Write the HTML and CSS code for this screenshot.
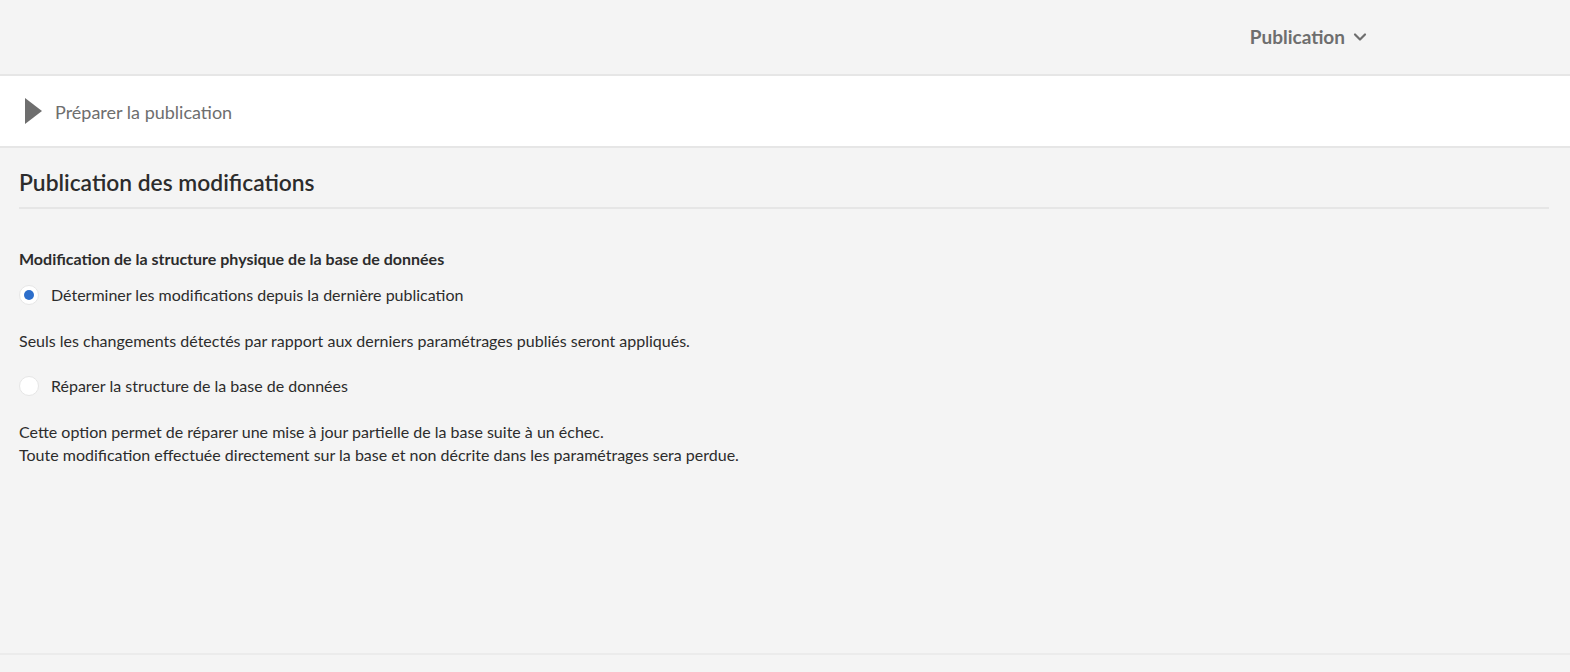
FILE: index.html
```html
<!DOCTYPE html>
<html lang="fr">
<head>
<meta charset="utf-8">
<link rel="stylesheet" href="styles.css">
</head>
<body>
<header class="topbar">
  <div class="menu">
    <span class="menu-label">Publication</span>
    <svg class="chev" width="14" height="10" viewBox="0 0 14 10"><path d="M2 2.5 L7 7.5 L12 2.5" fill="none" stroke="#6e6e6e" stroke-width="2.2" stroke-linecap="round" stroke-linejoin="round"/></svg>
  </div>
</header>
<div class="stepbar">
  <svg class="play" width="17" height="26" viewBox="0 0 17 26"><path d="M0 0 L17 13 L0 26 Z" fill="#6e6e6e"/></svg>
  <span class="step-label">Préparer la publication</span>
</div>
<main class="content">
  <h1 class="title">Publication des modifications</h1>
  <section class="group">
    <h2 class="group-label">Modification de la structure physique de la base de données</h2>
    <label class="radio-row">
      <span class="radio checked"></span>
      <span>Déterminer les modifications depuis la dernière publication</span>
    </label>
    <p class="desc">Seuls les changements détectés par rapport aux derniers paramétrages publiés seront appliqués.</p>
    <label class="radio-row">
      <span class="radio"></span>
      <span>Réparer la structure de la base de données</span>
    </label>
    <p class="desc">Cette option permet de réparer une mise à jour partielle de la base suite à un échec.<br>Toute modification effectuée directement sur la base et non décrite dans les paramétrages sera perdue.</p>
  </section>
</main>
<footer class="bottom"></footer>
</body>
</html>
```
FILE: styles.css
```css
html, body { margin: 0; padding: 0; }
body {
  background: #f4f4f4;
  font-family: Lato, "Open Sans", sans-serif;
  color: #2c2c2c;
  width: 1570px;
  height: 672px;
  overflow: hidden;
  display: flex;
  flex-direction: column;
}
.topbar {
  height: 74px;
  border-bottom: 2px solid #e6e6e6;
  display: flex;
  align-items: center;
  justify-content: flex-end;
  padding-right: 203px;
  box-sizing: content-box;
}
.menu { display: flex; align-items: center; gap: 8px; color: #6e6e6e; margin-top: -2px; }
.menu-label { font-size: 19px; font-weight: 700; }
.chev { margin-top: 1px; }
.stepbar {
  height: 70px;
  background: #ffffff;
  border-bottom: 2px solid #e6e6e6;
  display: flex;
  align-items: center;
  padding-left: 25px;
  gap: 13px;
}
.step-label { font-size: 18px; color: #6e6e6e; margin-top: 2px; }
.content { flex: 1; padding: 0 21px 0 19px; }
.title {
  margin: 22px 0 0 0;
  font-size: 22.8px;
  font-weight: 600;
  color: #2c2c2c;
  padding-bottom: 13px;
  border-bottom: 2px solid #e6e6e6;
  line-height: 24px;
}
.group { padding-top: 40px; }
.group-label { margin: 0; font-size: 16px; font-weight: 700; line-height: 20px; color: #2c2c2c; }
.radio-row { display: flex; align-items: center; gap: 12px; margin-top: 16px; font-size: 16px; line-height: 20px; }
.desc + .radio-row { margin-top: 24px; }
.radio {
  width: 20px; height: 20px; border-radius: 50%;
  background: #fff; border: 1px solid #e6e6e6;
  box-sizing: border-box; position: relative;
}
.radio.checked::after {
  content: ""; position: absolute; left: 4px; top: 4px;
  width: 10px; height: 10px; border-radius: 50%; background: #2c6ecb;
}
.desc { margin: 24px 0 0 0; font-size: 16px; line-height: 23px; }
.bottom { height: 17px; border-top: 2px solid #ebebeb; }
```
